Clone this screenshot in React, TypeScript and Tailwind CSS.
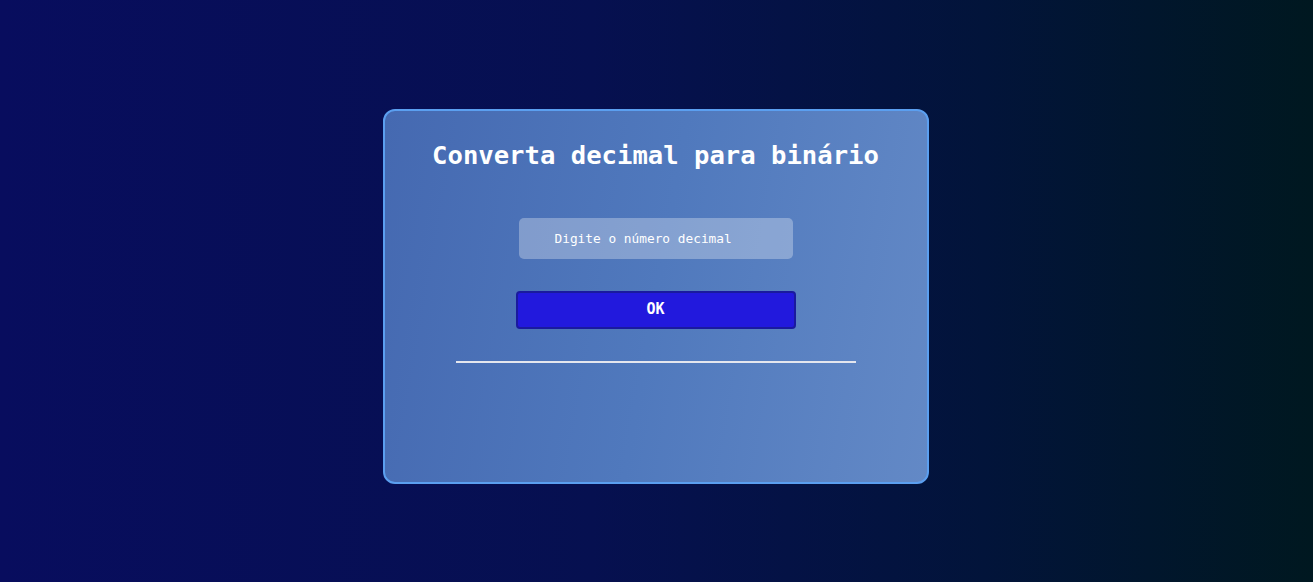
import React, { useState } from 'react';

export default function App() {
  const [value, setValue] = useState('');
  const [result, setResult] = useState('');

  const convert = () => {
    const n = parseInt(value, 10);
    setResult(isNaN(n) ? '' : n.toString(2));
  };

  return (
    <div className="w-full h-[582px] flex items-center justify-center pt-[10px] pr-[2px] bg-[linear-gradient(to_right,#080d5e,#061050_45%,#02143a_75%,#001820)] font-['DejaVu_Sans_Mono',monospace]">
      <div className="w-[546px] h-[375px] rounded-[12px] border-2 border-[#5b9ff0] bg-[linear-gradient(100deg,#4569b1,#5079bd_50%,#6389c6)] flex flex-col items-center">
        <h1 className="mt-[25px] h-[38px] leading-[38px] text-[25.6px] font-bold text-white">
          Converta decimal para binário
        </h1>
        <input
          value={value}
          onChange={(e) => setValue(e.target.value)}
          placeholder="Digite o número decimal"
          className="mt-[44px] w-[274px] h-[41px] rounded-[5px] bg-white/30 pl-[36px] text-[12.8px] text-white placeholder:text-white outline-none"
        />
        <button
          onClick={convert}
          className="mt-[32px] w-[280px] h-[38px] rounded-[4px] border-2 border-[#1a1a9e] bg-[#2219dd] text-white font-bold text-[15px]"
        >
          OK
        </button>
        <div className="mt-[32px] w-[400px] h-[2px] bg-[#e4e6ee]"></div>
        {result && <p className="mt-4 text-white text-lg">{result}</p>}
      </div>
    </div>
  );
}
